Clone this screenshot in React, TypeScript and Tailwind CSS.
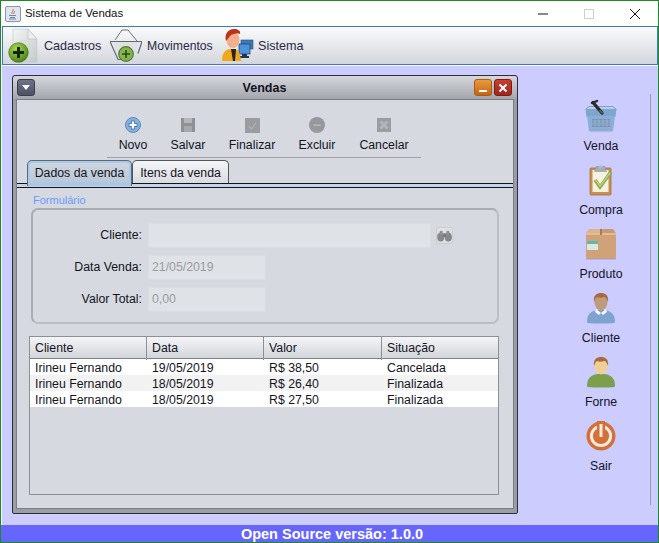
import type { ReactNode } from "react";

const font = { fontFamily: '"Liberation Sans", Arial, sans-serif' };

const IconDoc = () => (
  <svg width="36" height="36" viewBox="0 0 36 36">
    <defs>
      <linearGradient id="docg" x1="0" y1="0" x2="1" y2="1">
        <stop offset="0" stopColor="#f4f5f4" />
        <stop offset="1" stopColor="#c4c8cc" />
      </linearGradient>
      <radialGradient id="plusg" cx="0.4" cy="0.3" r="0.8">
        <stop offset="0" stopColor="#a8d94a" />
        <stop offset="1" stopColor="#3f7a12" />
      </radialGradient>
    </defs>
    <path d="M6 1h15l9 10v23H6z" fill="url(#docg)" stroke="#c4c6ca" strokeWidth="0.6" />
    <path d="M21 1v10h9z" fill="#eceeef" stroke="#b9bcc0" strokeWidth="0.6" />
    <path d="M12 13h13M12 16h13M12 19h13M22 22h5M22 25h5M22 28h5" stroke="#cfe0ca" strokeWidth="1" />
    <circle cx="11.5" cy="24.5" r="9.8" fill="url(#plusg)" stroke="#3c6a16" strokeWidth="0.6" />
    <path d="M11.5 19v11M6 24.5h11" stroke="#14240a" strokeWidth="3" />
  </svg>
);

const IconBasketPlus = () => (
  <svg width="32" height="33" viewBox="0 0 32 33">
    <path d="M3 13h26l-4 13H8z" fill="#dfe1e5" />
    <path d="M5 11 12 1h6l9 11" fill="none" stroke="#70747a" strokeWidth="1" />
    <path d="M0 12.5h32M0 12.5l8 18h3M32 12.5l-4 12" fill="none" stroke="#666a70" strokeWidth="1.2" />
    <circle cx="16" cy="25" r="7.3" fill="#84b54e" stroke="#54782f" strokeWidth="1.2" />
    <path d="M16 21v8M12 25h8" stroke="#2f4a19" strokeWidth="1.6" />
  </svg>
);

const IconUserPc = () => (
  <svg width="34" height="33" viewBox="0 0 34 33">
    <rect x="20" y="11" width="12" height="9" fill="#3f78b8" stroke="#2d4f7d" strokeWidth="0.6" />
    <rect x="18" y="15" width="11" height="10" fill="#4a94dc" stroke="#24466f" strokeWidth="0.8" />
    <path d="M21 25h5v2h2v2h-9v-2h2z" fill="#233650" />
    <path d="M1 32c0-9 4-12 9-12h3c4 0 6 3 7 12z" fill="#f0a81e" />
    <path d="M10 20l2 12h2l1-12z" fill="#2b2218" />
    <ellipse cx="12" cy="11" rx="6.5" ry="8" fill="#f2b08e" />
    <path d="M5 12C3 4 8 0 13 0c4 0 7 2 6 5-3-1-7 0-9 1-2 2-3 4-5 6z" fill="#b8341a" />
  </svg>
);

const ToolPlus = () => (
  <svg width="16" height="16" viewBox="0 0 16 16">
    <circle cx="8" cy="8" r="7.5" fill="#86afdc" stroke="#5f88ba" />
    <path d="M8 3.5v9M3.5 8h9" stroke="#4f7fb5" strokeWidth="3.8" />
    <path d="M8 4.5v7M4.5 8h7" stroke="#fff" strokeWidth="2.2" />
  </svg>
);

const ToolSave = () => (
  <svg width="14" height="14" viewBox="0 0 14 14">
    <rect width="14" height="14" fill="#8f9195" />
    <rect x="3" y="0" width="8" height="5" fill="#b4b6ba" />
    <rect x="3" y="8" width="8" height="6" fill="#a5a7ab" />
  </svg>
);

const ToolCheck = () => (
  <svg width="15" height="15" viewBox="0 0 15 15">
    <rect width="15" height="15" fill="#999b9f" />
    <path d="M4 8l2.5 3L11 4.5" fill="none" stroke="#b0b2b5" strokeWidth="1.2" />
  </svg>
);

const ToolMinus = () => (
  <svg width="16" height="16" viewBox="0 0 16 16">
    <circle cx="8" cy="8" r="8" fill="#96989c" />
    <rect x="4" y="7" width="8" height="2.4" fill="#b5b7ba" stroke="#85878b" strokeWidth="0.4" />
  </svg>
);

const ToolX = () => (
  <svg width="14" height="14" viewBox="0 0 14 14">
    <rect width="14" height="14" fill="#9b9da1" />
    <path d="M3.5 3.5l7 7M10.5 3.5l-7 7" stroke="#b4b6b9" strokeWidth="2.6" />
  </svg>
);

const Binoculars = () => (
  <svg width="16" height="12" viewBox="0 0 16 12">
    <ellipse cx="4" cy="7" rx="3.8" ry="4.8" fill="#85878a" />
    <ellipse cx="12" cy="7" rx="3.8" ry="4.8" fill="#85878a" />
    <rect x="3" y="0.5" width="3" height="4" fill="#8f9194" />
    <rect x="10" y="0.5" width="3" height="4" fill="#8f9194" />
    <rect x="7" y="3" width="2" height="4" fill="#6f7174" />
  </svg>
);

const SideBasket = () => (
  <svg width="32" height="34" viewBox="0 0 32 34">
    <path d="M0.5 10 4 7h24l3.5 3-1 8h-29z" fill="#7ea5d0" />
    <path d="M4 8h24l2 2H2z" fill="#b5d0e8" />
    <path d="M2 17h28l-2 15H4z" fill="#8aaed6" />
    <rect x="7" y="20" width="18" height="8" fill="#7590b2" />
    <path d="M7 22h18M7 24h18M7 26h18M10 20v8M14 20v8M18 20v8M22 20v8" stroke="#a0bbd9" strokeWidth="0.7" />
    <path d="M8 3.5 17 14" stroke="#2a2a2a" strokeWidth="3.4" strokeLinecap="round" />
    <path d="M7 4 12 2" stroke="#2a2a2a" strokeWidth="2.4" strokeLinecap="round" />
    <path d="M14.5 11l3 3.5" stroke="#666" strokeWidth="1.4" />
    <rect x="5" y="32" width="22" height="1.2" fill="#b9bad8" />
  </svg>
);

const SideClip = () => (
  <svg width="24" height="31" viewBox="0 0 24 31">
    <rect x="1" y="3" width="21" height="27" rx="1" fill="#c98f4f" stroke="#a86f35" strokeWidth="0.8" />
    <rect x="3.5" y="5" width="16" height="22" fill="#f6f2e2" />
    <path d="M7 1.5h9l1.5 5h-12z" fill="#a6acb8" stroke="#868c98" strokeWidth="0.5" />
    <circle cx="11.5" cy="2" r="1.8" fill="#b5bac4" />
    <path d="M6 15l5 7L22 7" fill="none" stroke="#8fb04e" strokeWidth="3.6" />
    <path d="M6.5 15l4.5 6L21 8" fill="none" stroke="#c3d88a" strokeWidth="1.2" />
  </svg>
);

const SideBox = () => (
  <svg width="32" height="32" viewBox="0 0 32 32">
    <path d="M1 5 4 1h12v4z" fill="#dbb48a" />
    <path d="M16 1h12l3 4H16z" fill="#c89c70" />
    <rect x="1" y="5" width="30" height="25" rx="1" fill="#cfa27a" />
    <rect x="1" y="5" width="30" height="2" fill="#e0bd96" />
    <rect x="15" y="1" width="2" height="6" fill="#a87d56" />
    <rect x="2" y="13" width="11" height="3" fill="#62b7a9" />
    <rect x="2" y="16" width="11" height="6" fill="#d6e9e2" />
    <rect x="1" y="30" width="30" height="1.5" fill="#b79e9c" />
  </svg>
);

const SidePerson = ({ body, collar }: { body: string; collar?: boolean }) => (
  <svg width="30" height="31" viewBox="0 0 30 31">
    <path d="M1 29c0-8 4-11 10-12h8c6 1 10 4 10 12 0 1-2 1.5-14 1.5S1 30 1 29z" fill={body} />
    {collar && <path d="M10 16l5 4 5-4 1 3-4 3-2-2-2 2-4-3z" fill="#f5f5f5" />}
    <ellipse cx="15" cy="9" rx="6.5" ry="8.5" fill={collar ? "#c09a7c" : "#f0cf94"} />
    <path d="M8 9C7 2 11 0 15 0s8 2 7 9c-1-3-2-5-4-5-2 1-5 1-7 0-2 1-2 3-3 5z" fill="#a56b3e" />
  </svg>
);

const SidePower = () => (
  <svg width="30" height="30" viewBox="0 0 30 30">
    <circle cx="15" cy="15" r="14.5" fill="#d2703a" />
    <circle cx="15" cy="15" r="9.6" fill="none" stroke="#fbe9dc" strokeWidth="3" />
    <rect x="11" y="0" width="8" height="10" fill="#d2703a" />
    <rect x="13.5" y="3" width="3" height="13" fill="#fbe9dc" />
  </svg>
);

const toolItems: { label: string; icon: ReactNode; w: string }[] = [
  { label: "Novo", icon: <ToolPlus />, w: "w-[52px]" },
  { label: "Salvar", icon: <ToolSave />, w: "w-[58px]" },
  { label: "Finalizar", icon: <ToolCheck />, w: "w-[70px]" },
  { label: "Excluir", icon: <ToolMinus />, w: "w-[60px]" },
  { label: "Cancelar", icon: <ToolX />, w: "w-[74px]" },
];

const sideItems: { label: string; icon: ReactNode }[] = [
  { label: "Venda", icon: <SideBasket /> },
  { label: "Compra", icon: <SideClip /> },
  { label: "Produto", icon: <SideBox /> },
  { label: "Cliente", icon: <SidePerson body="#7fa3cf" collar /> },
  { label: "Forne", icon: <SidePerson body="#7c9f4c" /> },
  { label: "Sair", icon: <SidePower /> },
];

const rows = [
  ["Irineu Fernando", "19/05/2019", "R$ 38,50", "Cancelada"],
  ["Irineu Fernando", "18/05/2019", "R$ 26,40", "Finalizada"],
  ["Irineu Fernando", "18/05/2019", "R$ 27,50", "Finalizada"],
];

const Field = ({ label, value, width, className }: { label: string; value?: string; width: string; className: string }) => (
  <div className={`flex items-center ${className}`}>
    <span className="w-[109px] text-right text-[12.3px] text-[#14141e]">{label}</span>
    <div className={`ml-[6px] h-[25px] ${width} bg-[#dfe2e6] border border-[#d9dce1] pl-[3px] text-[12.3px] leading-[23px] text-[#9a9ca1]`}>
      {value}
    </div>
  </div>
);

export default function App() {
  return (
    <div style={font} className="w-[659px] h-[543px] flex flex-col overflow-hidden border border-[#1f8a24] bg-white text-[#14141e]">
      {/* barra de titulo */}
      <div className="h-[25px] shrink-0 flex items-center bg-white">
        <div className="ml-[4px] w-[16px] h-[16px] rounded-[2px] border border-[#8b97a8] bg-[#dde6f0] flex items-center justify-center">
          <svg width="12" height="12" viewBox="0 0 12 12">
            <path d="M6 1c1 2-2 3-1 5M7.5 3c0 1-1 2-.7 3" fill="none" stroke="#d9662a" strokeWidth="1" />
            <path d="M2 7.5h7M3 9.5h5M2 11h7" stroke="#5b7fa6" strokeWidth="0.9" />
          </svg>
        </div>
        <span className="ml-[4px] text-[11.4px] text-[#111]">Sistema de Vendas</span>
        <div className="ml-auto flex items-center">
          <svg width="12" height="12" viewBox="0 0 12 12" className="mr-[34px]">
            <path d="M1 6h10" stroke="#111" strokeWidth="1" />
          </svg>
          <svg width="12" height="12" viewBox="0 0 12 12" className="mr-[34px] mt-[1px]">
            <rect x="1.5" y="1.5" width="9" height="9" fill="none" stroke="#cfcfcf" />
          </svg>
          <svg width="12" height="12" viewBox="0 0 12 12" className="mr-[17px]">
            <path d="M1 1l10 10M11 1 1 11" stroke="#111" strokeWidth="1" />
          </svg>
        </div>
      </div>

      {/* menu */}
      <div className="h-[39px] shrink-0 flex items-center border border-[#3f78c8] bg-gradient-to-b from-[#fbfbfc] to-[#d3d6dc] ml-px">
        <div className="ml-[4px]"><IconDoc /></div>
        <span className="ml-[1px] w-[66px] mt-[2px] text-[12.6px] text-[#2a2a48]">Cadastros</span>
        <IconBasketPlus />
        <span className="ml-[5px] w-[74px] mt-[2px] text-[12.2px] text-[#2a2a48]">Movimentos</span>
        <IconUserPc />
        <span className="ml-[3px] mt-[2px] text-[12.6px] text-[#2a2a48]">Sistema</span>
      </div>
      <div className="h-[1px] shrink-0 bg-white" />

      {/* area de trabalho */}
      <div className="flex-1 flex bg-[#ccccff] border-l border-white min-h-0">
        <div className="ml-[10px] mt-[9px] w-[506px] h-[439px] shrink-0 flex flex-col rounded-t-[3px] rounded-b-[2px] border border-[#2e2e38] bg-[#9a9da5] px-[3px] pb-[4px]">
          <div className="h-[23px] shrink-0 flex items-center bg-gradient-to-b from-[#d5d7dc] to-[#a3a6ad] -mx-[3px] pl-[4px] pr-[5px] rounded-t-[3px]">
            <div className="w-[18px] h-[17px] rounded-[3px] border border-[#3a3d4a] bg-gradient-to-b from-[#6e7488] to-[#4c5166] flex items-center justify-center">
              <div className="w-0 h-0 border-l-[4px] border-r-[4px] border-t-[5px] border-l-transparent border-r-transparent border-t-white" />
            </div>
            <span className="flex-1 ml-[20px] mt-[1px] text-center text-[12.5px] font-bold text-[#14141e]">Vendas</span>
            <div className="w-[18px] h-[17px] rounded-[3px] border border-[#a85c10] bg-gradient-to-b from-[#e89a3c] to-[#c8640e] flex items-end justify-center pb-[3px]">
              <div className="w-[8px] h-[2px] bg-white" />
            </div>
            <div className="ml-[2px] w-[18px] h-[17px] rounded-[3px] border border-[#7e1c12] bg-gradient-to-b from-[#c8402e] to-[#a0241a] flex items-center justify-center">
              <svg width="10" height="10" viewBox="0 0 10 10">
                <path d="M1.5 1.5l7 7M8.5 1.5l-7 7" stroke="#fff" strokeWidth="2" />
              </svg>
            </div>
          </div>

          <div className="flex-1 flex flex-col bg-[#d6d9e0] border border-[#7b7e86] min-h-0">
            {/* botoes */}
            <div className="h-[58px] shrink-0 flex flex-col items-center">
              <div className="flex ml-[-2px]">
                {toolItems.map((t) => (
                  <div key={t.label} className={`${t.w} h-[57px] flex flex-col items-center`}>
                    <div className="h-[16px] mt-[17px] flex items-center">{t.icon}</div>
                    <span className="mt-[4px] text-[12.3px] leading-[16px] whitespace-nowrap">{t.label}</span>
                  </div>
                ))}
              </div>
              <div className="w-[314px] h-px ml-[-2px] bg-[#a0a2a8] shrink-0" />
            </div>

            {/* abas */}
            <div className="h-[26px] shrink-0 flex items-end pl-[10px] border-b border-[#14141e]">
              <div className="relative -mb-[3px] h-[26px] w-[105px] rounded-t-[5px] border border-[#5a6a7e] border-b-0 bg-gradient-to-b from-[#a8cbe8] to-[#aac8e4] p-[2px]">
                <div className="h-[19px] rounded-[2px] bg-gradient-to-b from-[#cfd5dd] to-[#b8c8d8] text-center text-[12.3px] leading-[20px]">
                  Dados da venda
                </div>
              </div>
              <div className="h-[23px] w-[97px] rounded-t-[5px] border border-[#50545c] border-b-0 bg-gradient-to-b from-[#f4f5f7] to-[#d8dbe0] text-center text-[12.3px] leading-[24px]">
                Itens da venda
              </div>
            </div>
            <div className="h-[3px] shrink-0 bg-[#c2d4e6]" />
            <div className="h-px shrink-0 bg-[#14141e]" />

            {/* formulario */}
            <div className="flex-1 flex flex-col min-h-0 pl-[12px] pr-[14px]">
              <span className="ml-[4px] mt-[5px] text-[11px] leading-[14px] text-[#6a9aff]">Formulário</span>
              <div className="mt-[1px] ml-[2px] h-[116px] shrink-0 rounded-[7px] border-2 border-[#aaacb3] border-b-[#bcbec5] border-r-[#bcbec5] flex flex-col">
                <div className="flex items-center">
                  <Field label="Cliente:" width="w-[283px]" className="mt-[13px]" />
                  <div className="mt-[13px] ml-[5px] w-[17px] h-[17px] rounded-[3px] bg-[#dfe1e5] border border-[#c9ccd1] flex items-center justify-center">
                    <Binoculars />
                  </div>
                </div>
                <Field label="Data Venda:" value="21/05/2019" width="w-[118px]" className="mt-[7px]" />
                <Field label="Valor Total:" value="0,00" width="w-[118px]" className="mt-[7px]" />
              </div>

              {/* tabela */}
              <div className="mt-[12px] h-[159px] shrink-0 border border-[#8c8f96]">
                <div className="h-[22px] grid grid-cols-[117px_117px_118px_1fr] border-b border-[#7e8188] bg-gradient-to-b from-[#f4f5f7] to-[#d2d5da]">
                  {["Cliente", "Data", "Valor", "Situação"].map((h, i) => (
                    <div key={h} className={`pl-[5px] text-[12.3px] leading-[23px] ${i < 3 ? "border-r border-[#8c8f96]" : ""}`}>
                      {h}
                    </div>
                  ))}
                </div>
                {rows.map((r, i) => (
                  <div key={i} className={`h-[16px] grid grid-cols-[117px_117px_118px_1fr] ${i === 1 ? "bg-[#f2f2f2]" : "bg-white"}`}>
                    {r.map((c) => (
                      <div key={c} className="pl-[5px] text-[12.3px] leading-[19px] whitespace-nowrap">{c}</div>
                    ))}
                  </div>
                ))}
              </div>
            </div>
          </div>
        </div>

        {/* atalhos */}
        <div className="flex-1 flex justify-between min-w-0">
          <div className="ml-[47px] mt-[34px] w-[72px] flex flex-col items-center">
            {sideItems.map((s) => (
              <div key={s.label} className="h-[64px] w-full flex flex-col items-center">
                <div className="h-[32px] flex items-center justify-center">{s.icon}</div>
                <span className="mt-[6px] text-[12.3px] leading-[16px]">{s.label}</span>
              </div>
            ))}
          </div>
          <div className="mt-[28px] mb-[20px] mr-[7px] w-px bg-[#9a9ca8]" />
        </div>
      </div>

      {/* rodape */}
      <div className="h-[17px] shrink-0 pl-[5px] bg-[#6666ff] text-center text-white text-[14.5px] font-bold leading-[18px]">
        Open Source versão: 1.0.0
      </div>
    </div>
  );
}
